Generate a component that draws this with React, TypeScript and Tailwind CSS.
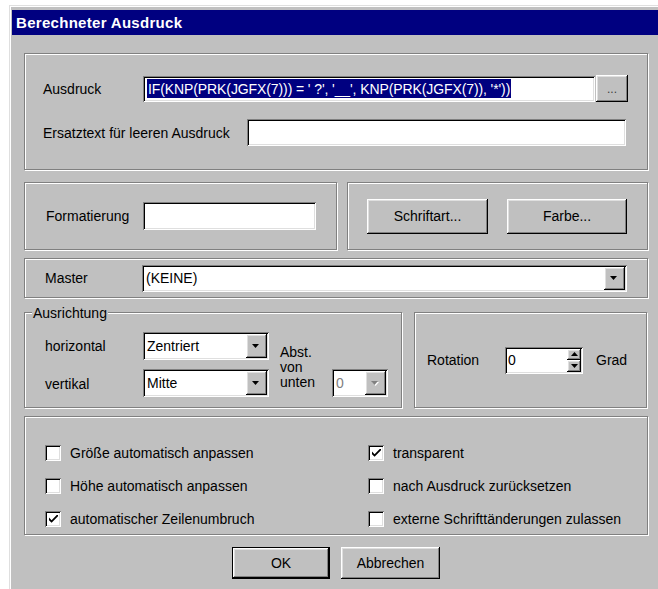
import React from 'react';

// classic 3D bevels
const sunken =
    'bg-white shadow-[inset_1px_1px_0_#808080,inset_-1px_-1px_0_#ffffff,inset_2px_2px_0_#000000,inset_-2px_-2px_0_#dfdfdf]';
const raised =
    'bg-[#c0c0c0] shadow-[inset_-1px_-1px_0_#000000,inset_1px_1px_0_#ffffff,inset_-2px_-2px_0_#808080,inset_2px_2px_0_#dfdfdf]';
const etched = 'border border-[#808080] shadow-[inset_1px_1px_0_#ffffff,1px_1px_0_#ffffff]';

const DownArrow: React.FC<{ disabled?: boolean }> = ({ disabled }) => (
    <svg width="9" height="5" viewBox="0 0 9 5">
        {disabled && <polygon points="1,1 8,1 4.5,5" fill="#ffffff" />}
        <polygon points="0,0 7,0 3.5,4" fill={disabled ? '#808080' : '#000000'} />
    </svg>
);

const ComboButton: React.FC<{ disabled?: boolean }> = ({ disabled }) => (
    <div className={`${raised} w-[21px] self-stretch my-[2px] mr-[2px] flex items-center justify-center`}>
        <DownArrow disabled={disabled} />
    </div>
);

const Combo: React.FC<{ value: string; className: string; disabled?: boolean }> = ({ value, className, disabled }) => (
    <div className={`${sunken} ${className} flex items-stretch`}>
        <div className={`flex-1 flex items-center pl-[4px] ${disabled ? 'text-[#808080]' : ''}`}>{value}</div>
        <ComboButton disabled={disabled} />
    </div>
);

const Checkbox: React.FC<{ checked?: boolean; label: string }> = ({ checked, label }) => (
    <div className="flex items-center gap-[9px] h-[16px]">
        <div className={`${sunken} w-[16px] h-[16px] flex items-center justify-center`}>
            {checked && (
                <svg width="9" height="9" viewBox="0 0 7 7">
                    <path d="M0 2 L0 4 L2 6 L7 1 L7 -1 L2 4 Z" fill="#000000" />
                </svg>
            )}
        </div>
        <span>{label}</span>
    </div>
);

const SpinArrow: React.FC<{ up?: boolean }> = ({ up }) => (
    <svg width="7" height="4" viewBox="0 0 7 4">
        <polygon points={up ? '3.5,0 7,4 0,4' : '0,0 7,0 3.5,4'} fill="#000000" />
    </svg>
);

export default function App() {
    return (
        <div className="h-screen bg-white overflow-hidden font-['Liberation_Sans',Arial,sans-serif] text-[14px] leading-none text-black">
            <div className="ml-[9px] mt-[5px] w-[700px] h-[620px] bg-[#c0c0c0] border-l border-t border-[#dfdfdf] shadow-[inset_1px_1px_0_#ffffff] pl-[2px] pt-[4px]">
                {/* title bar */}
                <div className="h-[25px] bg-[#000080] flex items-center pl-[4px] text-white font-bold text-[15px] tracking-[0.3px]">
                    Berechneter Ausdruck
                </div>

                <div className="pl-[12px] pt-[18px] w-[636px] flex flex-col">
                    {/* expression */}
                    <div className={`${etched} h-[117px] pl-[18px] pt-[21px]`}>
                        <div className="flex items-center">
                            <span className="w-[100px]">Ausdruck</span>
                            <div className={`${sunken} w-[452px] h-[26px] flex items-center pl-[4px]`}>
                                <span className="bg-[#000080] text-white px-[1px] h-[19px] flex items-center tracking-[-0.1px]">
                                    IF(KNP(PRK(JGFX(7))) = ' ?', '__', KNP(PRK(JGFX(7)), '*'))
                                </span>
                            </div>
                            <div className={`${raised} w-[32px] h-[27px] ml-[1px] flex items-center justify-center text-[12px] text-[#404040]`}>
                                ...
                            </div>
                        </div>
                        <div className="flex items-center mt-[17px]">
                            <span className="w-[204px]">Ersatztext für leeren Ausdruck</span>
                            <div className={`${sunken} w-[379px] h-[27px]`} />
                        </div>
                    </div>

                    {/* formatting + font */}
                    <div className="flex gap-[10px] mt-[12px]">
                        <div className={`${etched} w-[313px] h-[68px] pl-[21px] flex items-center`}>
                            <span className="w-[97px]">Formatierung</span>
                            <div className={`${sunken} w-[173px] h-[28px]`} />
                        </div>
                        <div className={`${etched} w-[301px] h-[68px] pl-[19px] flex items-center gap-[19px]`}>
                            <div className={`${raised} w-[121px] h-[35px] flex items-center justify-center`}>Schriftart...</div>
                            <div className={`${raised} w-[120px] h-[35px] flex items-center justify-center`}>Farbe...</div>
                        </div>
                    </div>

                    {/* master */}
                    <div className={`${etched} h-[40px] mt-[8px] pl-[20px] flex items-center`}>
                        <span className="w-[97px]">Master</span>
                        <Combo value="(KEINE)" className="w-[485px] h-[27px]" />
                    </div>

                    {/* alignment + rotation */}
                    <div className="flex gap-[12px] mt-[14px]">
                        <div className={`${etched} relative w-[378px] h-[96px] pl-[20px] pt-[19px] flex`}>
                            <span className="absolute -top-[7px] left-[7px] bg-[#c0c0c0] px-[1px]">Ausrichtung</span>
                            <div className="flex flex-col gap-[9px]">
                                <div className="flex items-center">
                                    <span className="w-[98px]">horizontal</span>
                                    <Combo value="Zentriert" className="w-[126px] h-[28px]" />
                                </div>
                                <div className="flex items-center">
                                    <span className="w-[98px] pt-[2px]">vertikal</span>
                                    <Combo value="Mitte" className="w-[126px] h-[28px]" />
                                </div>
                            </div>
                            <div className="ml-[11px] mt-[13px] flex flex-col leading-[15px]">
                                <span>Abst.</span>
                                <span>von</span>
                                <span>unten</span>
                            </div>
                            <div className="ml-[17px] mt-[37px]">
                                <Combo value="0" className="w-[56px] h-[28px]" disabled />
                            </div>
                        </div>
                        <div className={`${etched} w-[233px] h-[96px] pl-[12px] flex items-center`}>
                            <span className="w-[78px]">Rotation</span>
                            <div className={`${sunken} w-[78px] h-[27px] flex items-stretch`}>
                                <div className="flex-1 flex items-center pl-[3px]">0</div>
                                <div className="w-[14px] my-[2px] mr-[2px] flex flex-col">
                                    <div className={`${raised} flex-1 flex items-center justify-center`}>
                                        <SpinArrow up />
                                    </div>
                                    <div className={`${raised} flex-1 flex items-center justify-center`}>
                                        <SpinArrow />
                                    </div>
                                </div>
                            </div>
                            <span className="ml-[13px]">Grad</span>
                        </div>
                    </div>

                    {/* options */}
                    <div className={`${etched} h-[119px] mt-[8px] pl-[20px] pt-[28px] flex`}>
                        <div className="w-[323px] flex flex-col gap-[17px]">
                            <Checkbox label="Größe automatisch anpassen" />
                            <Checkbox label="Höhe automatisch anpassen" />
                            <Checkbox checked label="automatischer Zeilenumbruch" />
                        </div>
                        <div className="flex flex-col gap-[17px]">
                            <Checkbox checked label="transparent" />
                            <Checkbox label="nach Ausdruck zurücksetzen" />
                            <Checkbox label="externe Schrifttänderungen zulassen" />
                        </div>
                    </div>

                    {/* dialog buttons */}
                    <div className="flex justify-center gap-[11px] mt-[12px]">
                        <div className="border border-black">
                            <div className={`${raised} w-[96px] h-[30px] flex items-center justify-center`}>OK</div>
                        </div>
                        <div className={`${raised} w-[99px] h-[32px] flex items-center justify-center`}>Abbrechen</div>
                    </div>
                </div>
            </div>
        </div>
    );
}
